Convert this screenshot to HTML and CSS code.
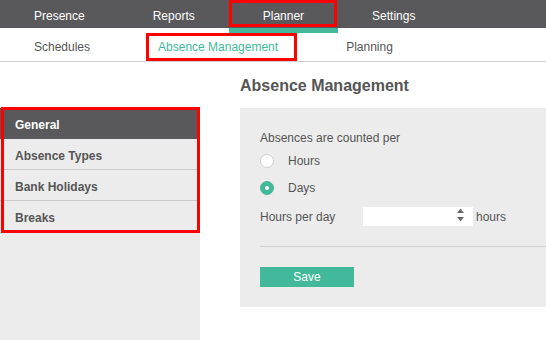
FILE: index.html
```html
<!DOCTYPE html>
<html lang="en">
<head>
  <meta charset="UTF-8" />
  <title>Planner - Absence Management</title>
  <link rel="stylesheet" href="styles.css">
</head>
<body>
  <nav class="topnav">
    <a class="topnav-item">Presence</a>
    <a class="topnav-item">Reports</a>
    <a class="topnav-item active marked">Planner</a>
    <a class="topnav-item">Settings</a>
  </nav>
  <nav class="subnav">
    <a class="subnav-item">Schedules</a>
    <a class="subnav-item active marked">Absence Management</a>
    <a class="subnav-item">Planning</a>
  </nav>

  <div class="content">
    <aside class="sidebar">
      <ul class="side-menu marked">
        <li class="active">General</li>
        <li>Absence Types</li>
        <li>Bank Holidays</li>
        <li>Breaks</li>
      </ul>
    </aside>

    <main class="main">
      <h1 class="page-title">Absence Management</h1>
      <div class="panel">
        <p class="count-label">Absences are counted per</p>
        <div class="radio-row">
          <span class="radio"></span>
          <span>Hours</span>
        </div>
        <div class="radio-row">
          <span class="radio checked"></span>
          <span>Days</span>
        </div>
        <div class="field-row">
          <label class="field-label">Hours per day</label>
          <div class="spin-input">
            <svg width="7" height="19" viewBox="0 0 7 19">
              <polygon points="0,6 3.5,1.5 7,6" fill="#6a6a6a"/>
              <polygon points="0,10 3.5,14.5 7,10" fill="#6a6a6a"/>
            </svg>
          </div>
          <span class="unit">hours</span>
        </div>
        <div class="divider"></div>
        <button class="save-btn">Save</button>
      </div>
    </main>
  </div>
</body>
</html>
```

FILE: styles.css
```css
* {
  box-sizing: border-box;
  font-family: 'Liberation Sans', Arial, sans-serif;
}

html, body {
  height: 100%;
}

body {
  margin: 0;
  background: #fff;
  color: #555;
  font-size: 12px;
  display: flex;
  flex-direction: column;
}

/* annotation boxes */
.marked {
  position: relative;
}

.marked::after {
  content: "";
  position: absolute;
  border: 3px solid #f00;
  pointer-events: none;
}

/* top navigation */
.topnav {
  display: flex;
  height: 28px;
  background: #59595b;
}

.topnav-item {
  padding: 4px 34px 0;
  line-height: 24px;
  color: #fff;
}

.topnav-item.active {
  box-shadow: 0 5px 0 #42b99b;
}

.topnav-item.marked::after {
  top: 0;
  left: 0;
  right: 1px;
  bottom: 1px;
}

/* sub navigation */
.subnav {
  display: flex;
  height: 34px;
  border-bottom: 1px solid #cfcfcf;
}

.subnav-item {
  padding: 0 34px;
  line-height: 38px;
  color: #555;
}

.subnav-item.active {
  color: #42b99b;
}

.subnav-item.marked::after {
  top: 5px;
  left: 22px;
  right: 15px;
  bottom: 0;
}

/* page */
.content {
  flex: 1;
  display: flex;
  gap: 40px;
}

.sidebar {
  width: 200px;
  margin-top: 46px;
  background: #ececec;
}

.side-menu {
  list-style: none;
  margin: 0;
  padding: 0;
}

.side-menu.marked::after {
  top: -1px;
  left: 1px;
  right: 0;
  bottom: -1px;
}

.side-menu li {
  height: 31px;
  padding: 2px 0 0 15px;
  line-height: 30px;
  font-weight: bold;
  color: #555;
  border-bottom: 1px solid #cbcbcb;
}

.side-menu li.active {
  background: #59595b;
  color: #fff;
  border-bottom-color: #59595b;
}

.side-menu li:last-child {
  border-bottom: none;
}

.main {
  flex: 1;
}

.page-title {
  margin: 0;
  height: 46px;
  padding-top: 1px;
  line-height: 46px;
  font-size: 16px;
  font-weight: bold;
  color: #555;
}

.panel {
  background: #ececec;
  padding: 22px 0 20px 20px;
}

.count-label {
  margin: 0 0 1px;
  line-height: 16px;
}

.radio-row {
  display: flex;
  align-items: center;
  gap: 14px;
  height: 27px;
}

.radio {
  width: 14px;
  height: 14px;
  border-radius: 50%;
  background: #fff;
  border: 1px solid #cfcfcf;
}

.radio.checked {
  background: #42b99b;
  border-color: #42b99b;
  display: flex;
  align-items: center;
  justify-content: center;
}

.radio.checked::before {
  content: "";
  width: 4px;
  height: 4px;
  border-radius: 50%;
  background: #fff;
}

.field-row {
  display: flex;
  align-items: center;
  margin-top: 6px;
  height: 19px;
}

.field-label {
  width: 103px;
}

.spin-input {
  width: 110px;
  height: 19px;
  background: #fff;
  display: flex;
  justify-content: flex-end;
  padding-right: 9px;
}

.unit {
  margin-left: 3px;
}

.divider {
  margin-top: 20px;
  height: 1px;
  background: #cfcfcf;
}

.save-btn {
  display: block;
  margin-top: 20px;
  width: 94px;
  height: 20px;
  padding: 0;
  border: none;
  background: #42b99b;
  color: #fff;
  font-size: 12px;
  cursor: pointer;
}
```
